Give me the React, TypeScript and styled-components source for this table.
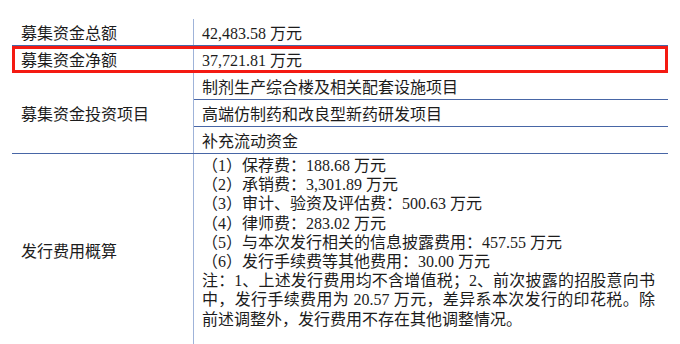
import styled, { createGlobalStyle } from 'styled-components';

const GlobalStyle = createGlobalStyle`
  html, body {
    margin: 0;
    padding: 0;
    background: #ffffff;
    overflow: hidden;
  }
`;

const LINE = '#4866a6';
const DIVIDER = '#9fb3d9';

const Page = styled.div`
  padding: 19px 12px 0 12px;
  font-family: "Liberation Serif", "Noto Sans CJK SC", serif;
  font-size: 16px;
  color: #1c1c1c;
`;

const Table = styled.div`
  width: 656px;
  display: flex;
  flex-direction: column;
`;

const Row = styled.div<{ $highlight?: boolean }>`
  display: grid;
  grid-template-columns: 182px 1fr;
  border-bottom: 1px solid ${LINE};
  min-height: 26px;
  outline: ${(p) => (p.$highlight ? '3px solid #f41a12' : 'none')};
  outline-offset: -3px;
`;

const Label = styled.div`
  display: flex;
  align-items: center;
  padding-left: 9px;
  border-right: 1px solid ${DIVIDER};
  white-space: nowrap;
`;

const Value = styled.div`
  display: flex;
  align-items: center;
  padding-left: 8px;
  white-space: nowrap;
`;

const SubList = styled.div`
  display: flex;
  flex-direction: column;
`;

const SubRow = styled.div<{ $last?: boolean }>`
  height: 26px;
  display: flex;
  align-items: center;
  padding-left: 8px;
  border-bottom: ${(p) => (p.$last ? 'none' : `1px solid ${LINE}`)};
  white-space: nowrap;
`;

const Lines = styled.div`
  padding: 2px 13px 18px 8px;
  line-height: 19.2px;
`;

const Line = styled.div<{ $justify?: boolean }>`
  height: 19.2px;
  overflow: visible;
  white-space: ${(p) => (p.$justify ? 'normal' : 'nowrap')};
  text-align: ${(p) => (p.$justify ? 'justify' : 'left')};
  text-align-last: ${(p) => (p.$justify ? 'justify' : 'auto')};
`;

// full-width punctuation keeps its whole em box, as in the printed table
const Punct = styled.span<{ $open?: boolean }>`
  display: inline-block;
  width: 1em;
  line-height: 16px;
  vertical-align: baseline;
  font-family: "Noto Sans CJK SC", sans-serif;
  text-align: ${(p) => (p.$open ? 'right' : 'left')};
`;

const PUNCT = /([（）：、；，。])/;

function Text({ children }: { children: string }) {
  return (
    <>
      {children.split(PUNCT).map((part, i) =>
        i % 2 === 1 ? (
          <Punct key={i} $open={part === '（'}>
            {part}
          </Punct>
        ) : (
          part
        )
      )}
    </>
  );
}

const fees = [
  '（1）保荐费：188.68 万元',
  '（2）承销费：3,301.89 万元',
  '（3）审计、验资及评估费：500.63 万元',
  '（4）律师费：283.02 万元',
  '（5）与本次发行相关的信息披露费用：457.55 万元',
  '（6）发行手续费等其他费用：30.00 万元',
];

const notes = [
  '注：1、上述发行费用均不含增值税；2、前次披露的招股意向书',
  '中，发行手续费用为 20.57 万元，差异系本次发行的印花税。除',
  '前述调整外，发行费用不存在其他调整情况。',
];

const projects = [
  '制剂生产综合楼及相关配套设施项目',
  '高端仿制药和改良型新药研发项目',
  '补充流动资金',
];

export default function App() {
  return (
    <>
      <GlobalStyle />
      <Page>
        <Table>
          <Row>
            <Label>募集资金总额</Label>
            <Value>42,483.58 万元</Value>
          </Row>
          <Row $highlight>
            <Label>募集资金净额</Label>
            <Value>37,721.81 万元</Value>
          </Row>
          <Row>
            <Label>募集资金投资项目</Label>
            <SubList>
              {projects.map((p, i) => (
                <SubRow key={p} $last={i === projects.length - 1}>
                  {p}
                </SubRow>
              ))}
            </SubList>
          </Row>
          <Row>
            <Label>发行费用概算</Label>
            <Lines>
              {fees.map((f) => (
                <Line key={f}>
                  <Text>{f}</Text>
                </Line>
              ))}
              {notes.map((n, i) => (
                <Line key={n} $justify={i < notes.length - 1}>
                  <Text>{n}</Text>
                </Line>
              ))}
            </Lines>
          </Row>
        </Table>
      </Page>
    </>
  );
}
